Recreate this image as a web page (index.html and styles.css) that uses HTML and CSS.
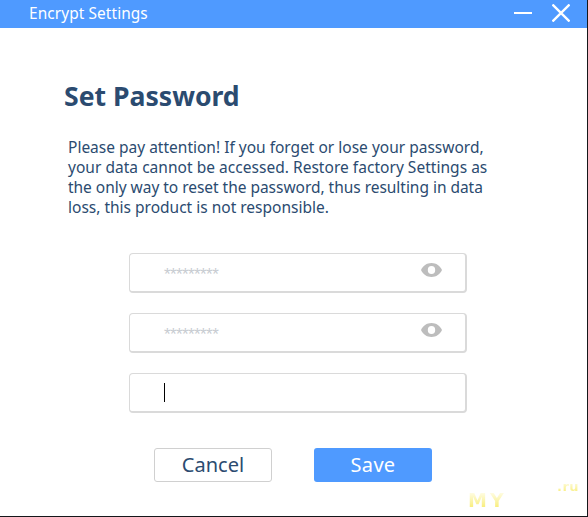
FILE: index.html
```
<!DOCTYPE html>
<html lang="en">
<head>
    <meta charset="UTF-8">
    <meta name="viewport" content="width=device-width, initial-scale=1.0">
    <title>Encrypt Settings</title>
    <link rel="stylesheet" href="styles.css">
</head>
<body>

<div class="window">
    <!-- Title bar -->
    <header class="titlebar">
        <span class="titlebar-text">Encrypt Settings</span>
        <svg class="icon-min" width="18" height="2" viewBox="0 0 18 2"><path d="M0 1H18" stroke="#fff" stroke-width="2"/></svg>
        <svg class="icon-close" width="18" height="18" viewBox="0 0 18 18"><path d="M0.5 0.5L17.5 17.5M17.5 0.5L0.5 17.5" stroke="#fff" stroke-width="2.3"/></svg>
    </header>

    <main class="content">
        <h1>Set Password</h1>
        <p class="notice">
            Please pay attention! If you forget or lose your password,<br>
            <span class="wide">your data cannot be accessed. Restore factory Settings as</span><br>
            <span class="tight">the only way to reset the password, thus resulting in data</span><br>
            loss, this product is not responsible.
        </p>

        <form class="fields">
            <div class="field">
                <span class="mask">*********</span>
                <svg class="eye" width="21" height="14" viewBox="0 0 21 14"><path fill="#bdbdbd" fill-rule="evenodd" d="M10.5 0C5.8 0 1.8 2.8 0 7c1.8 4.2 5.8 7 10.5 7s8.7-2.8 10.5-7C19.2 2.8 15.2 0 10.5 0zM10.5 3a3.7 4 0 1 1 0 8a3.7 4 0 1 1 0-8z"/></svg>
            </div>
            <div class="field">
                <span class="mask">*********</span>
                <svg class="eye" width="21" height="14" viewBox="0 0 21 14"><path fill="#bdbdbd" fill-rule="evenodd" d="M10.5 0C5.8 0 1.8 2.8 0 7c1.8 4.2 5.8 7 10.5 7s8.7-2.8 10.5-7C19.2 2.8 15.2 0 10.5 0zM10.5 3a3.7 4 0 1 1 0 8a3.7 4 0 1 1 0-8z"/></svg>
            </div>
            <div class="field">
                <span class="caret"></span>
            </div>
        </form>

        <div class="buttons">
            <button type="button" class="btn cancel">Cancel</button>
            <button type="button" class="btn save">Save</button>
        </div>
    </main>

    <!-- Watermark over the window corner -->
    <div class="mark mark-my">MY</div>
    <div class="mark mark-ru">.ru</div>
</div>

</body>
</html>
```

FILE: styles.css
```
* {
    box-sizing: border-box;
}

body {
    margin: 0;
    background-color: #15171a;
    font-family: "Noto Sans", "Open Sans", sans-serif;
    color: #2b4b70;
    overflow: hidden;
}

.window {
    position: relative;
    width: 587px;
    height: 516px;
    background-color: #fff;
}

.titlebar {
    display: flex;
    align-items: center;
    height: 28px;
    padding: 0 17px 0 29px;
    background-color: #4f9aff;
    color: #fff;
}

.titlebar-text {
    flex: 1;
    font-size: 15.4px;
    line-height: 28px;
    letter-spacing: 0.1px;
}

.icon-min {
    margin-top: -2px;
    margin-right: 20px;
}

.icon-close {
    margin-top: -2px;
}

.content {
    padding: 50px 0 0 64px;
}

h1 {
    margin: 0;
    font-size: 26.6px;
    line-height: 37px;
    font-weight: 700;
    white-space: nowrap;
}

.notice {
    margin: 22px 0 0 4px;
    font-size: 15.5px;
    line-height: 20px;
    white-space: nowrap;
}

.notice .wide {
    letter-spacing: 0.03px;
}

.notice .tight {
    letter-spacing: -0.03px;
}

.fields {
    display: flex;
    flex-direction: column;
    gap: 20px;
    margin: 36px 0 0 65px;
}

.field {
    display: flex;
    align-items: flex-start;
    justify-content: space-between;
    width: 338px;
    height: 40px;
    padding: 9px 23px 0 34px;
    border: 1px solid #dadada;
    border-right-width: 2px;
    border-bottom-width: 2px;
    border-radius: 4px;
}

.mask {
    font-family: "Liberation Sans", Arial, sans-serif;
    font-size: 17px;
    line-height: 24px;
    letter-spacing: -0.6px;
    color: #c8ccd2;
}

.caret {
    width: 1px;
    height: 19px;
    background-color: #000;
}

.buttons {
    display: flex;
    gap: 42px;
    margin: 35px 0 0 90px;
}

.btn {
    width: 118px;
    height: 34px;
    padding: 0;
    border-radius: 3px;
    font-family: inherit;
    font-size: 20px;
    line-height: 30px;
}

.cancel {
    border: 1px solid #d0d0d0;
    background-color: #fff;
    color: #2b4b70;
}

.save {
    border: none;
    background-color: #4f9aff;
    color: #fff;
    letter-spacing: 0.3px;
}

.mark {
    position: absolute;
    font-family: "DejaVu Sans", sans-serif;
    font-weight: 700;
    background-image: linear-gradient(#fffef0, #f8ec70);
    -webkit-background-clip: text;
    background-clip: text;
    color: transparent;
}

.mark-my {
    left: 468px;
    top: 491px;
    font-size: 19px;
    line-height: 18px;
    letter-spacing: 3px;
}

.mark-ru {
    left: 557px;
    top: 480px;
    font-size: 13px;
    line-height: 14px;
    letter-spacing: 0.5px;
}
```
